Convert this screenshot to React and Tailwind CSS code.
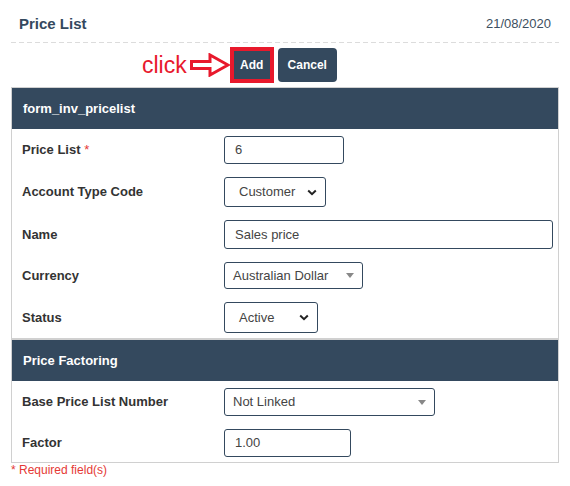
import React from "react"

const font = { fontFamily: '"Liberation Sans", Arial, sans-serif' }

const Chevron = () => (
  <svg width="10" height="7" viewBox="0 0 10 7" className="shrink-0">
    <path d="M1.2 1.5 L5 5.2 L8.8 1.5" fill="none" stroke="#222" strokeWidth="2" />
  </svg>
)

const Caret = () => (
  <svg width="8" height="5" viewBox="0 0 8 5" className="shrink-0">
    <path d="M0 0 H8 L4 5 Z" fill="#888" />
  </svg>
)

const TextInput = ({ value, className }) => (
  <div className={`flex items-center border border-[#34495e] rounded-[3px] pl-[10px] text-[13px] text-[#444] bg-white ${className}`}>
    {value}
  </div>
)

const NativeSelect = ({ value, className }) => (
  <div className={`flex items-center justify-between border border-[#34495e] rounded-[3px] pl-[14px] pr-[8px] text-[13px] text-[#444] bg-white ${className}`}>
    <span>{value}</span>
    <Chevron />
  </div>
)

const FancySelect = ({ value, className }) => (
  <div className={`flex items-center justify-between border border-[#34495e] rounded-[3px] pl-[8px] pr-[8px] text-[13px] text-[#444] bg-white ${className}`}>
    <span>{value}</span>
    <Caret />
  </div>
)

const Row = ({ label, required, children }) => (
  <div className="flex items-center">
    <div className="w-[212px] pl-[10px] text-[13px] font-bold text-[#333]">
      {label}
      {required && <span className="text-[#e53935] font-normal"> *</span>}
    </div>
    {children}
  </div>
)

const PanelHeader = ({ title }) => (
  <div className="h-[41px] bg-[#34495e] flex items-center pl-[11px] text-[13px] font-bold text-white">
    {title}
  </div>
)

export default function App() {
  return (
    <div className="w-[570px] h-[486px] bg-white px-[11px]" style={font}>
      <div className="h-[42px] pt-[6px] flex items-center justify-between px-[8px]">
        <h1 className="text-[15px] font-bold text-[#34495e]">Price List</h1>
        <span className="text-[13px] text-[#3d4f60]">21/08/2020</span>
      </div>
      <div className="h-px bg-[linear-gradient(to_right,#dcdcdc_60%,transparent_0)] bg-[length:8px_1px] bg-repeat-x" />

      <div className="mt-[4px] h-[36px] flex items-center pl-[131px]">
        <span className="text-[23px] text-[#e8192c] leading-none">click</span>
        <svg width="40" height="24" viewBox="0 0 40 24" className="ml-[3px] shrink-0">
          <polygon
            points="1.5,8.5 20,8.5 20,2 38,12 20,22 20,15.5 1.5,15.5"
            fill="#fff"
            stroke="#e8192c"
            strokeWidth="3"
            strokeLinejoin="miter"
          />
        </svg>
        <div className="w-[44px] h-[36px] border-[4px] border-[#e8192c] bg-[#34495e] flex items-center justify-center text-[12px] font-bold text-white">
          Add
        </div>
        <button className="ml-[4px] w-[59px] h-[34px] rounded-[4px] bg-[#34495e] text-[12px] font-bold text-white">
          Cancel
        </button>
      </div>

      <div className="mt-[4px] border border-[#d0d0d0]">
        <PanelHeader title="form_inv_pricelist" />
        <div className="flex flex-col gap-[13px] pt-[7px] pb-[5px]">
          <Row label="Price List" required>
            <TextInput value="6" className="w-[120px] h-[28px]" />
          </Row>
          <Row label="Account Type Code">
            <NativeSelect value="Customer" className="w-[102px] h-[30px]" />
          </Row>
          <Row label="Name">
            <TextInput value="Sales price" className="w-[329px] h-[29px]" />
          </Row>
          <Row label="Currency">
            <FancySelect value="Australian Dollar" className="w-[139px] h-[27px]" />
          </Row>
          <Row label="Status">
            <NativeSelect value="Active" className="w-[94px] h-[31px]" />
          </Row>
        </div>
      </div>

      <div className="border border-[#d0d0d0]">
        <PanelHeader title="Price Factoring" />
        <div className="flex flex-col gap-[13px] pt-[7px] pb-[5px]">
          <Row label="Base Price List Number">
            <FancySelect value="Not Linked" className="w-[211px] h-[28px]" />
          </Row>
          <Row label="Factor">
            <TextInput value="1.00" className="w-[127px] h-[28px]" />
          </Row>
        </div>
      </div>

      <p className="text-[12px] leading-[14px] text-[#e53935]">* Required field(s)</p>
    </div>
  )
}
